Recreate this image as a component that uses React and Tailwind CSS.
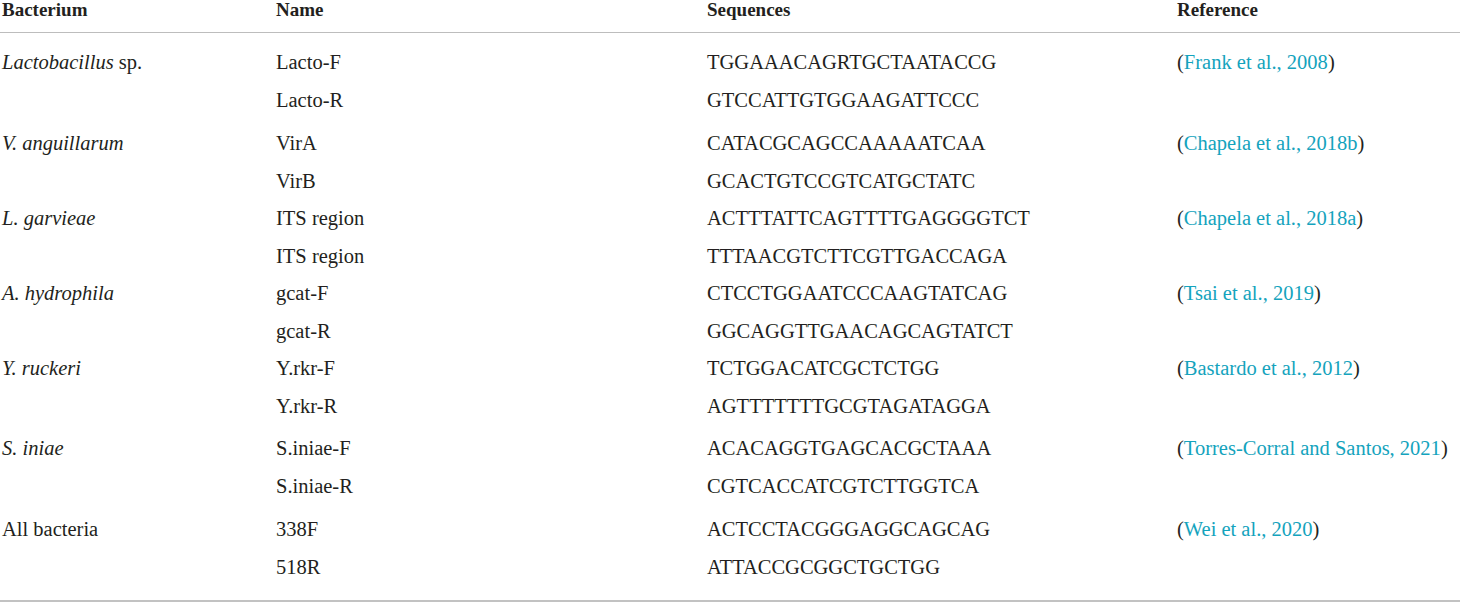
import React from 'react';

const groups = [
  {
    genus: <><i>Lactobacillus</i> sp.</>,
    gap: '',
    primers: [
      ['Lacto-F', 'TGGAAACAGRTGCTAATACCG'],
      ['Lacto-R', 'GTCCATTGTGGAAGATTCCC'],
    ],
    ref: 'Frank et al., 2008',
  },
  {
    genus: <i>V. anguillarum</i>,
    gap: 'mt-[6px]',
    primers: [
      ['VirA', 'CATACGCAGCCAAAAATCAA'],
      ['VirB', 'GCACTGTCCGTCATGCTATC'],
    ],
    ref: 'Chapela et al., 2018b',
  },
  {
    genus: <i>L. garvieae</i>,
    gap: '',
    primers: [
      ['ITS region', 'ACTTTATTCAGTTTTGAGGGGTCT'],
      ['ITS region', 'TTTAACGTCTTCGTTGACCAGA'],
    ],
    ref: 'Chapela et al., 2018a',
  },
  {
    genus: <i>A. hydrophila</i>,
    gap: '',
    primers: [
      ['gcat-F', 'CTCCTGGAATCCCAAGTATCAG'],
      ['gcat-R', 'GGCAGGTTGAACAGCAGTATCT'],
    ],
    ref: 'Tsai et al., 2019',
  },
  {
    genus: <i>Y. ruckeri</i>,
    gap: '',
    primers: [
      ['Y.rkr-F', 'TCTGGACATCGCTCTGG'],
      ['Y.rkr-R', 'AGTTTTTTTGCGTAGATAGGA'],
    ],
    ref: 'Bastardo et al., 2012',
  },
  {
    genus: <i>S. iniae</i>,
    gap: 'mt-[5px]',
    primers: [
      ['S.iniae-F', 'ACACAGGTGAGCACGCTAAA'],
      ['S.iniae-R', 'CGTCACCATCGTCTTGGTCA'],
    ],
    ref: 'Torres-Corral and Santos, 2021',
  },
  {
    genus: 'All bacteria',
    gap: 'mt-[6px]',
    primers: [
      ['338F', 'ACTCCTACGGGAGGCAGCAG'],
      ['518R', 'ATTACCGCGGCTGCTGG'],
    ],
    ref: 'Wei et al., 2020',
  },
];

const cols = 'grid grid-cols-[274px_431px_470px_1fr] pl-[2px]';

export default function App() {
  return (
    <div className="h-[603px] w-[1460px] overflow-hidden bg-white font-['Liberation_Serif',serif] text-[#231f20]">
      {/* header */}
      <div className={`${cols} h-[33px] border-b border-[#bdbdbd] text-[19px] font-bold leading-[19px]`}>
        <div>Bacterium</div>
        <div>Name</div>
        <div>Sequences</div>
        <div>Reference</div>
      </div>

      <div className="h-[567px] pt-[11.3px] text-[20.5px] leading-[37.5px]">
        {groups.map((g, gi) => (
          <div key={gi} className={g.gap}>
            {g.primers.map(([name, seq], i) => (
              <div key={i} className={`${cols} h-[37.5px] whitespace-nowrap`}>
                <div>{i === 0 ? g.genus : ''}</div>
                <div>{name}</div>
                <div>{seq}</div>
                <div>
                  {i === 0 && (
                    <>(<span className="text-[#14a3bd]">{g.ref}</span>)</>
                  )}
                </div>
              </div>
            ))}
          </div>
        ))}
      </div>

      <div className="h-[2px] bg-[#c2c2c2]" />
    </div>
  );
}
